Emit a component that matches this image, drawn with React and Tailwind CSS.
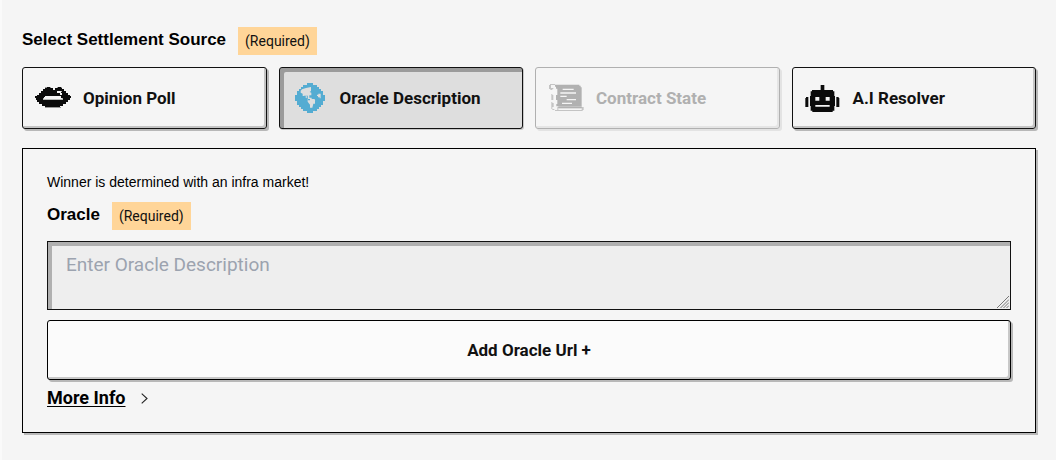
import React from "react";

function LipsIcon() {
  return (
    <svg width="36" height="22" viewBox="0 0 36 22" aria-hidden="true">
      <path fill="#0b0b0b" d="M10 0h6v1h2v2h2V1h2V0h5v2h2v2h2v2h2v2h2v1h1v2h-1v2h-2v2h-2v2h-3v2h-3v2H10v-2H7v-2H4v-2H2v-2H1v-2H0v-2h2V8h2V6h2V4h2V2h2z" />
      <path fill="#9a9a9a" d="M10 0h2v1h-2zM15 0h1v1h-1zM22 0h1v1h-1zM26 0h1v1h-1zM10 20h16v1H10z" />
      <path fill="#f4f4f4" d="M10 9h16v2h1v1H9v-2h1zM22 4h4v2h1v2h-2V6h-3z" />
      <path fill="#b5b8b5" d="M8 11h1v1h18v-1h1v2H8zM26 4h1v1h-1z" />
    </svg>
  );
}

function GlobeIcon() {
  return (
    <svg width="30" height="30" viewBox="0 0 90 90" aria-hidden="true">
      <path fill="#54acd2" d="M36 0h18v6h12v6h6v6h6v6h6v12h6v18h-6v12h-6v6h-6v6h-6v6H54v6H36v-6H24v-6h-6v-6h-6v-6H6V54H0V36h6V24h6v-6h6v-6h6V6h12z" />
      <path fill="#dedede" d="M33 15l15-3v12l-4 3 5 2v8h-6v7h7v4h8l3 4h-1v10h-5l-3 12h-7v-9l-7-9v-9l-6-2-4-6h-5v-7l-6-3v-6l4-4z" />
      <path fill="#54acd2" d="M27 38h12v9H27zM39 48h6v4h-6z" />
      <path fill="#dedede" d="M32 40h5v4h-5zM70 32h7v14h-3v-3h-5v-4h-3v-4h4z" />
    </svg>
  );
}

function ScrollIcon() {
  return (
    <svg width="35" height="28" viewBox="0 0 105 84" aria-hidden="true">
      <path fill="#b1b1b1" d="M18 2h73v3h4v5h3v57H22v-7h3V48h-4V33h4V14h-4V8h-3z" />
      <path fill="#c4c4c4" d="M3 0h15v3H6v9h7v3h-3v18h3v15h-3v9h4v12h-4v6h6v3h-6v-3H7V54h3V48H7V30h3V18H4v-3H0V3h3zM25 69h79v9h-3v3H18v-3h80v-6H28v6h-3z" />
      <path fill="#b1b1b1" d="M28 67h70v6H28z" />
      <path fill="#f5f5f5" d="M41 14h33v4H41zM34 25h47v4H34zM34 35h19v4H34zM53 45h28v4H53zM39 56h30v4H39z" />
    </svg>
  );
}

function RobotIcon() {
  return (
    <svg width="35" height="27" viewBox="0 0 105 81" aria-hidden="true">
      <path fill="#0b0b0b" d="M47 0h11v15h26v4h4v14h2v30h-2v14h-5v4H22v-4h-5V63h-2V33h2V19h4v-4h26z" />
      <path fill="#0b0b0b" d="M3 36h7v30H1V39h2zM94 36h7v3h2v27h-9z" />
      <path fill="#f4f4f4" d="M31 36h12v11H31zM62 36h12v11H62zM31 60h43v5H31z" />
    </svg>
  );
}

function RequiredBadge() {
  return (
    <span className="bg-[#ffd598] px-[7px] py-1 font-[Roboto,sans-serif] text-sm leading-5 text-[#111]">
      (Required)
    </span>
  );
}

const optionBase =
  "flex h-[62px] items-center gap-3 rounded-[3px] border px-3 text-left font-[Roboto,sans-serif] text-[17px] leading-6 font-bold";
const raised =
  "border-[#111] text-[#111] shadow-[2px_2px_0_#b8b8b8,inset_-2px_-2px_0_#c4c4c4]";
const pressed =
  "border-[#111] bg-[#dedede] text-[#111] shadow-[1px_1px_0_#c8c8c8,inset_4px_4px_0_#9b9b9b]";
const faded =
  "border-[#b0b0b0] text-[#b0b0b0] shadow-[2px_2px_0_#e3e3e3,inset_-2px_-2px_0_#e5e5e5]";

const options = [
  { label: "Opinion Poll", Icon: LipsIcon, look: raised },
  { label: "Oracle Description", Icon: GlobeIcon, look: pressed, selected: true },
  { label: "Contract State", Icon: ScrollIcon, look: faded, disabled: true },
  { label: "A.I Resolver", Icon: RobotIcon, look: raised },
];

export default function App() {
  return (
    <main className="min-h-screen border-l-2 border-[#fafafa] bg-[#f5f5f5] px-5 pt-[27px] pb-6 font-['Liberation_Sans',Arial,sans-serif] text-black">
      <div className="flex items-center gap-3">
        <h2 className="pb-0.5 text-[17px] leading-5 font-bold">Select Settlement Source</h2>
        <RequiredBadge />
      </div>

      <div className="mt-3 grid grid-cols-4 gap-3">
        {options.map(({ label, Icon, look, selected, disabled }) => (
          <button
            key={label}
            type="button"
            disabled={disabled}
            aria-pressed={Boolean(selected)}
            className={`${optionBase} ${look}`}
          >
            <span className="flex w-9 shrink-0 justify-center">
              <Icon />
            </span>
            {label}
          </button>
        ))}
      </div>

      <section className="mt-[19px] border border-black px-6 pt-6 pb-[22px] shadow-[2px_2px_0_#b8b8b8]">
        <p className="text-sm leading-[18px]">Winner is determined with an infra market!</p>
        <div className="mt-[11px] flex items-center gap-3">
          <label htmlFor="oracle" className="pb-0.5 text-[17px] leading-5 font-bold">
            Oracle
          </label>
          <RequiredBadge />
        </div>
        <div className="relative mt-[11px]">
          <textarea
            id="oracle"
            placeholder="Enter Oracle Description"
            className="block h-[69px] w-full border border-[#111] bg-[#eeeeee] px-[18px] pt-[11px] font-[Roboto,sans-serif] text-[19px] leading-6 shadow-[inset_4px_4px_0_#b0b0b0] outline-none placeholder:text-[#9ca3af] [&::-webkit-resizer]:bg-transparent"
          />
          <svg
            className="pointer-events-none absolute right-0.5 bottom-0.5"
            width="12"
            height="12"
            viewBox="0 0 12 12"
            stroke="#777"
            aria-hidden="true"
          >
            <path d="M0 12L12 0M3.5 12L12 3.5M6.5 12L12 6.5M9.5 12L12 9.5" />
          </svg>
        </div>
        <button
          type="button"
          className="mt-[10px] h-[60px] w-full rounded-[3px] border border-black bg-[#fbfbfb] font-[Roboto,sans-serif] text-[17px] leading-6 font-bold text-[#111] shadow-[2px_2px_0_#b8b8b8,inset_-2px_-2px_0_#c8c8c8]"
        >
          Add Oracle Url +
        </button>
        <a
          href="#more-info"
          className="mt-[6px] inline-flex h-6 items-center gap-[15px] align-top font-[Roboto,sans-serif] text-lg leading-6 font-bold"
        >
          <span className="underline underline-offset-2">More Info</span>
          <svg width="7" height="11" viewBox="0 0 7 11" fill="none" stroke="#222" strokeWidth="1.1" aria-hidden="true">
            <path d="M.7.7l5.3 4.8L.7 10.3" />
          </svg>
        </a>
      </section>
    </main>
  );
}
